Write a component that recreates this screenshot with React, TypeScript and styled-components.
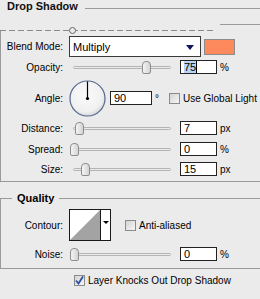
import React from "react";
import styled, { createGlobalStyle } from "styled-components";

const GlobalStyle = createGlobalStyle`
  html, body { margin: 0; padding: 0; background: #ebebeb; }
  body { font-family: "Liberation Sans", Arial, sans-serif; font-size: 10px; color: #000; }
`;

const Page = styled.div`
  width: 260px;
  height: 299px;
  overflow: hidden;
  background: #ebebeb;
  display: flex;
  flex-direction: column;
`;

const TitleRow = styled.div`
  height: 14px;
  display: flex;
  align-items: flex-start;
`;

const Title = styled.div`
  font-weight: bold;
  font-size: 11px;
  line-height: 12px;
  margin-left: 7px;
  color: #111;
`;

const Rule = styled.div<{ $left?: number }>`
  flex: 1;
  height: 1px;
  background: #9a9a9a;
  margin-left: ${(p) => p.$left ?? 6}px;
  margin-top: 8px;
`;

const TopRule = styled.div`
  margin: 10px 0 0 220px;
  height: 1px;
  background: #9a9a9a;
`;

const DashRow = styled.div`
  margin-top: 5px;
  width: 215px;
  height: 1px;
  background: repeating-linear-gradient(90deg, #8a8a8a 0 6px, transparent 6px 9px);
  position: relative;
`;

const Knob = styled.div`
  position: absolute;
  left: 69px;
  top: -3px;
  width: 5px;
  height: 5px;
  border: 1px solid #666;
  border-radius: 50%;
  background: #ebebeb;
`;

const GroupBox = styled.div`
  border-left: 1px solid #9a9a9a;
  border-bottom: 1px solid #9a9a9a;
  padding: 5px 0 5px 0;
  display: flex;
  flex-direction: column;
`;

const Row = styled.div<{ $top?: number; $h?: number }>`
  display: flex;
  align-items: center;
  margin-top: ${(p) => p.$top ?? 0}px;
  height: ${(p) => p.$h ?? 14}px;
`;

const Label = styled.div`
  width: 62px;
  text-align: right;
  white-space: nowrap;
  margin-right: 6px;
`;

const Select = styled.div`
  height: 19px;
  border: 1px solid #3a3a3a;
  background: #fff;
  display: flex;
  align-items: center;
  justify-content: space-between;
  padding: 0 6px 0 3px;
  box-sizing: content-box;
  width: 121px;
  font-size: 11px;
`;

const Arrow = styled.div`
  width: 0;
  height: 0;
  border-left: 4px solid transparent;
  border-right: 4px solid transparent;
  border-top: 5px solid #14145e;
  margin-top: 2px;
`;

const Swatch = styled.div`
  width: 29px;
  height: 14px;
  margin-left: 3px;
  background: #fc8a5c;
  border: 1px solid #8c8c8c;
`;

const SliderBox = styled.div`
  width: 106px;
  height: 14px;
  position: relative;
  display: flex;
  align-items: center;
`;

const Track = styled.div`
  margin-left: 4px;
  width: 98px;
  height: 3px;
  border: 1px solid #b4b4b4;
  border-radius: 2px;
  background: linear-gradient(#f8f8f8, #dedede);
  box-sizing: border-box;
`;

const Thumb = styled.div`
  position: absolute;
  top: 1px;
  width: 7px;
  height: 11px;
  border: 1px solid #8e8e8e;
  border-radius: 4px 4px 2px 2px;
  background: linear-gradient(90deg, #f4f4f4, #d4d4d4);
`;

const Field = styled.div<{ $w?: number; $ml?: number }>`
  height: 12px;
  border: 1px solid #222;
  background: #fff;
  margin-left: ${(p) => p.$ml ?? 5}px;
  display: flex;
  align-items: center;
  padding-left: 3px;
  box-sizing: content-box;
  width: ${(p) => (p.$w ?? 37) - 5}px;
  font-size: 11px;
`;

const Selected = styled.span`
  background: #b8d4f6;
  border-right: 1px solid #000;
`;

const Unit = styled.div`
  margin-left: 3px;
`;

const Dial = styled.svg`
  display: block;
`;

const Check = styled.div`
  width: 9px;
  height: 9px;
  border: 1px solid #8a8a8a;
  background: linear-gradient(135deg, #d4d4d4, #f6f6f6);
  display: flex;
  align-items: center;
  justify-content: center;
  flex: none;
`;

const CheckLabel = styled.div`
  margin-left: 3px;
  white-space: nowrap;
`;

const Quality = styled.fieldset`
  margin: 10px 0 0 0;
  padding: 0 0 7px 0;
  min-width: 0;
  border: none;
  border-top: 1px solid #9a9a9a;
  border-left: 1px solid #9a9a9a;
  border-bottom: 1px solid #9a9a9a;
  display: flex;
  flex-direction: column;
`;

const Legend = styled.legend`
  font-weight: bold;
  font-size: 11px;
  line-height: 13px;
  padding: 0 5px;
  margin-left: 11px;
`;

const ContourBox = styled.div`
  width: 40px;
  height: 30px;
  border: 1px solid #1a1a1a;
  background: #fff;
  display: flex;
`;

const ContourDrop = styled.div`
  width: 9px;
  border-left: 1px solid #1a1a1a;
  display: flex;
  align-items: flex-start;
  justify-content: center;
  padding-top: 11px;
`;

const SmallArrow = styled.div`
  width: 0;
  height: 0;
  border-left: 3px solid transparent;
  border-right: 3px solid transparent;
  border-top: 3px solid #000;
`;

const Indent = styled.div<{ $w: number }>`
  width: ${(p) => p.$w}px;
  flex: none;
`;

function Slider({ at }: { at: number }) {
  return (
    <SliderBox>
      <Track />
      <Thumb style={{ left: at - 4 }} />
    </SliderBox>
  );
}

function CheckBox({ checked }: { checked?: boolean }) {
  return (
    <Check>
      {checked && (
        <svg width="9" height="9" viewBox="0 0 9 9">
          <path d="M1 4.5 L3.5 7.5 L8 0.5" stroke="#2d4fa6" strokeWidth="1.8" fill="none" />
        </svg>
      )}
    </Check>
  );
}

function SliderRow({ label, at, value, unit, top }: { label: string; at: number; value: React.ReactNode; unit: string; top: number }) {
  return (
    <Row $top={top}>
      <Label>{label}</Label>
      <Slider at={at} />
      <Field>{value}</Field>
      <Unit>{unit}</Unit>
    </Row>
  );
}

export default function App() {
  return (
    <Page>
      <GlobalStyle />
      <TitleRow>
        <Title>Drop Shadow</Title>
        <Rule $left={7} />
      </TitleRow>
      <TopRule />
      <DashRow>
        <Knob />
      </DashRow>
      <GroupBox>
        <Row $h={21}>
          <Label>Blend Mode:</Label>
          <Select>
            <span>Multiply</span>
            <Arrow />
          </Select>
          <Swatch />
        </Row>
        <SliderRow top={3} label="Opacity:" at={77} value={<Selected>75</Selected>} unit="%" />
        <Row $top={6} $h={36}>
          <Label>Angle:</Label>
          <Dial width="37" height="37" viewBox="0 0 37 37">
            <defs>
              <radialGradient id="dialg" cx="0.45" cy="0.4" r="0.6">
                <stop offset="0" stopColor="#fbfbfb" />
                <stop offset="0.8" stopColor="#f0f0f0" />
                <stop offset="1" stopColor="#d8d8d8" />
              </radialGradient>
            </defs>
            <circle cx="18.5" cy="18.5" r="17.5" fill="url(#dialg)" stroke="#54698f" strokeWidth="1.2" />
            <line x1="18.5" y1="1.5" x2="18.5" y2="18.5" stroke="#000" strokeWidth="1.2" />
            <circle cx="18.5" cy="18.5" r="1.6" fill="#000" />
          </Dial>
          <Field $w={42} $ml={4}>90</Field>
          <Unit>°</Unit>
          <Indent $w={10} />
          <CheckBox />
          <CheckLabel>Use Global Light</CheckLabel>
        </Row>
        <SliderRow top={5} label="Distance:" at={10} value="7" unit="px" />
        <SliderRow top={7} label="Spread:" at={5} value="0" unit="%" />
        <SliderRow top={6} label="Size:" at={16} value="15" unit="px" />
      </GroupBox>
      <Quality>
        <Legend>Quality</Legend>
        <Row $top={4} $h={32}>
          <Label>Contour:</Label>
          <ContourBox>
            <svg width="30" height="30" viewBox="0 0 30 30">
              <polygon points="0,30 30,0 30,30" fill="#a3a3a3" />
            </svg>
            <ContourDrop>
              <SmallArrow />
            </ContourDrop>
          </ContourBox>
          <Indent $w={14} />
          <CheckBox />
          <CheckLabel>Anti-aliased</CheckLabel>
        </Row>
        <SliderRow top={6} label="Noise:" at={5} value="0" unit="%" />
      </Quality>
      <Row $top={6} $h={11}>
        <Indent $w={74} />
        <CheckBox checked />
        <CheckLabel>Layer Knocks Out Drop Shadow</CheckLabel>
      </Row>
    </Page>
  );
}
